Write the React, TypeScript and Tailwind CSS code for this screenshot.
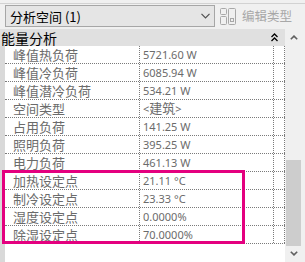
const rows: { label: string; value: React.ReactNode }[] = [
  { label: "峰值热负荷", value: "5721.60 W" },
  { label: "峰值冷负荷", value: "6085.94 W" },
  { label: "峰值潜冷负荷", value: "534.21 W" },
  {
    label: "空间类型",
    value: (
      <>
        &lt;<span className="text-[13px]">建筑</span>&gt;
      </>
    ),
  },
  { label: "占用负荷", value: "141.25 W" },
  { label: "照明负荷", value: "395.25 W" },
  { label: "电力负荷", value: "461.13 W" },
  { label: "加热设定点", value: "21.11 °C" },
  { label: "制冷设定点", value: "23.33 °C" },
  { label: "湿度设定点", value: "0.0000%" },
  { label: "除湿设定点", value: "70.0000%" },
];

function EditTypeIcon() {
  return (
    <svg width="16" height="17" viewBox="0 0 16 17" fill="none" stroke="#a8a8a8" strokeWidth="1">
      <rect x="0.5" y="0.5" width="6" height="6" rx="1" />
      <rect x="0.5" y="8.5" width="6" height="8" rx="1" />
      <rect x="8.5" y="0.5" width="7" height="16" rx="1" />
      <rect x="10.5" y="10.5" width="3" height="3" />
    </svg>
  );
}

export default function App() {
  return (
    <div
      className="relative w-[305px] h-[262px] overflow-hidden bg-[#f0f0f0] flex flex-col"
      style={{ fontFamily: '"Noto Sans", "Noto Sans CJK SC", sans-serif' }}
    >
      {/* top edge */}
      <div className="h-[3px]" />
      <div className="h-px bg-[#d2d2d2]" />

      {/* type selector row */}
      <div className="mt-px flex items-center h-[22px]">
        <div className="ml-[5px] w-[210px] h-[22px] border border-[#a6a6a6] bg-[#e5e5e5] flex items-center pl-[4px] pr-[4px]">
          <span className="flex-1 text-[13px] leading-none text-black" style={{ fontFamily: '"Noto Sans CJK SC", sans-serif' }}>
            分析空间 (1)
          </span>
          <svg width="9" height="6" viewBox="0 0 9 6" fill="none" stroke="#505050" strokeWidth="1.2">
            <path d="M0.5 0.8 L4.5 4.8 L8.5 0.8" />
          </svg>
        </div>
        <div className="ml-[5px] flex items-center gap-[6px]">
          <EditTypeIcon />
          <span className="text-[12.5px] leading-none text-[#a8a8a8]" style={{ fontFamily: '"Noto Sans CJK SC", sans-serif' }}>
            编辑类型
          </span>
        </div>
      </div>

      {/* palette body */}
      <div className="mt-[2px] flex flex-1 min-h-0">
        <div className="w-[285px] flex flex-col">
          <div className="h-[17px] bg-[#e0e0e0] flex items-center pl-[1px] pr-[7px]">
            <span className="flex-1 text-[14px] leading-none text-black" style={{ fontFamily: '"Noto Sans CJK SC", sans-serif' }}>
              能量分析
            </span>
            <svg width="7" height="9" viewBox="0 0 7 9" fill="none" stroke="#000" strokeWidth="1.3">
              <path d="M0.5 4 L3.5 1 L6.5 4" />
              <path d="M0.5 8 L3.5 5 L6.5 8" />
            </svg>
          </div>
          <div className="flex flex-1 bg-white">
            <div className="w-[5px] bg-[#d9d9d9]" />
            <div className="w-[280px] flex flex-col">
              {rows.map((row, i) => (
                <div key={i} className="flex h-[18px] border-b border-dotted border-[#7a7a7a]">
                  <div
                    className="w-[134px] pl-[8px] flex items-center text-[13px] leading-none text-[#6b6b6b]"
                    style={{ fontFamily: '"Noto Sans CJK SC", sans-serif' }}
                  >
                    {row.label}
                  </div>
                  <div className="w-[134px] pl-[3px] border-l border-dotted border-[#7a7a7a] flex items-center text-[11px] leading-none text-[#6b6b6b]">
                    {row.value}
                  </div>
                  <div className="w-[12px] border-l border-r border-dotted border-[#7a7a7a]" />
                </div>
              ))}
            </div>
          </div>
        </div>

        {/* scrollbar */}
        <div className="w-[20px] flex flex-col">
          <div className="w-[17px] h-[17px] flex items-center justify-center">
            <svg width="8" height="5" viewBox="0 0 8 5" fill="none" stroke="#606060" strokeWidth="1.6">
              <path d="M0.8 4.3 L4 1.1 L7.2 4.3" />
            </svg>
          </div>
          <div className="ml-px mt-[115px] w-[15px] h-[90px] bg-[#cdcdcd]" />
          <div className="w-[17px] h-[17px] flex items-center justify-center">
            <svg width="8" height="5" viewBox="0 0 8 5" fill="none" stroke="#606060" strokeWidth="1.6">
              <path d="M0.8 0.7 L4 3.9 L7.2 0.7" />
            </svg>
          </div>
        </div>
      </div>

      {/* highlight box */}
      <div className="absolute left-[2px] top-[170px] w-[243px] h-[74px] border-[3px] border-[#e4007f]" />
    </div>
  );
}
